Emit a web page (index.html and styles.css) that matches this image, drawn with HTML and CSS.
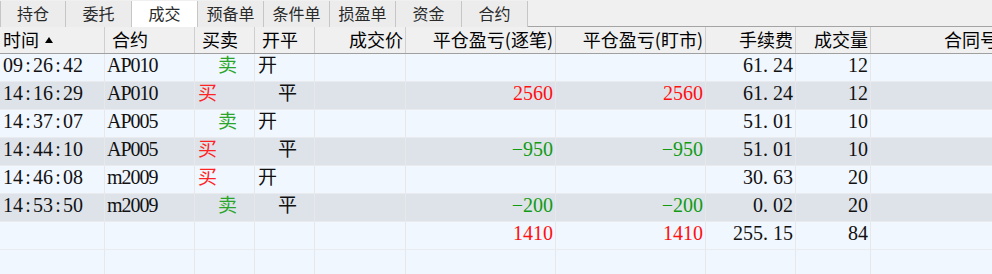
FILE: index.html
```html
<!DOCTYPE html>
<html lang="zh-CN">
<head>
<meta charset="utf-8">
<title>成交</title>
<link rel="stylesheet" href="styles.css">
</head>
<body>
<div class="panel">
  <div class="tabbar">
    <div class="tab">持仓</div>
    <div class="tab">委托</div>
    <div class="tab active">成交</div>
    <div class="tab">预备单</div>
    <div class="tab">条件单</div>
    <div class="tab">损盈单</div>
    <div class="tab">资金</div>
    <div class="tab">合约</div>
    <div class="tabfill"></div>
  </div>
  <div class="grid">
    <div class="row head">
      <div class="h first">时间<span class="sort"></span></div>
      <div class="h">合约</div>
      <div class="h">买卖</div>
      <div class="h">开平</div>
      <div class="h r">成交价</div>
      <div class="h r">平仓盈亏(逐笔)</div>
      <div class="h r">平仓盈亏(盯市)</div>
      <div class="h r">手续费</div>
      <div class="h r">成交量</div>
      <div class="h r">合同号</div>
    </div>

    <div class="row light">
      <div class="c">09<span class="co">:</span>26<span class="co">:</span>42</div>
      <div class="c sym">AP010</div>
      <div class="c cn sell ind">卖</div>
      <div class="c cn">开</div>
      <div class="c r"></div>
      <div class="c r"></div>
      <div class="c r"></div>
      <div class="c r">61<span class="dt">.</span>24</div>
      <div class="c r">12</div>
      <div class="c r"></div>
    </div>

    <div class="row dark">
      <div class="c">14<span class="co">:</span>16<span class="co">:</span>29</div>
      <div class="c sym">AP010</div>
      <div class="c cn buy">买</div>
      <div class="c cn ind">平</div>
      <div class="c r"></div>
      <div class="c r up">2560</div>
      <div class="c r up">2560</div>
      <div class="c r">61<span class="dt">.</span>24</div>
      <div class="c r">12</div>
      <div class="c r"></div>
    </div>

    <div class="row light">
      <div class="c">14<span class="co">:</span>37<span class="co">:</span>07</div>
      <div class="c sym">AP005</div>
      <div class="c cn sell ind">卖</div>
      <div class="c cn">开</div>
      <div class="c r"></div>
      <div class="c r"></div>
      <div class="c r"></div>
      <div class="c r">51<span class="dt">.</span>01</div>
      <div class="c r">10</div>
      <div class="c r"></div>
    </div>

    <div class="row dark">
      <div class="c">14<span class="co">:</span>44<span class="co">:</span>10</div>
      <div class="c sym">AP005</div>
      <div class="c cn buy">买</div>
      <div class="c cn ind">平</div>
      <div class="c r"></div>
      <div class="c r down">−950</div>
      <div class="c r down">−950</div>
      <div class="c r">51<span class="dt">.</span>01</div>
      <div class="c r">10</div>
      <div class="c r"></div>
    </div>

    <div class="row light">
      <div class="c">14<span class="co">:</span>46<span class="co">:</span>08</div>
      <div class="c sym">m2009</div>
      <div class="c cn buy">买</div>
      <div class="c cn">开</div>
      <div class="c r"></div>
      <div class="c r"></div>
      <div class="c r"></div>
      <div class="c r">30<span class="dt">.</span>63</div>
      <div class="c r">20</div>
      <div class="c r"></div>
    </div>

    <div class="row dark">
      <div class="c">14<span class="co">:</span>53<span class="co">:</span>50</div>
      <div class="c sym">m2009</div>
      <div class="c cn sell ind">卖</div>
      <div class="c cn ind">平</div>
      <div class="c r"></div>
      <div class="c r down">−200</div>
      <div class="c r down">−200</div>
      <div class="c r">0<span class="dt">.</span>02</div>
      <div class="c r">20</div>
      <div class="c r"></div>
    </div>

    <div class="row light">
      <div class="c"></div>
      <div class="c"></div>
      <div class="c"></div>
      <div class="c"></div>
      <div class="c r"></div>
      <div class="c r up">1410</div>
      <div class="c r up">1410</div>
      <div class="c r">255<span class="dt">.</span>15</div>
      <div class="c r">84</div>
      <div class="c r"></div>
    </div>

    <div class="row light">
      <div class="c"></div>
      <div class="c"></div>
      <div class="c"></div>
      <div class="c"></div>
      <div class="c"></div>
      <div class="c"></div>
      <div class="c"></div>
      <div class="c"></div>
      <div class="c"></div>
      <div class="c"></div>
    </div>
  </div>
</div>
</body>
</html>
```

FILE: styles.css
```css
html, body {
  margin: 0;
  padding: 0;
  overflow: hidden;
  background: #f1f7fe;
}

.panel {
  width: 1040px;
}

.tabbar {
  display: flex;
  height: 27px;
  background: #f0f0f0;
  font-family: "Noto Sans CJK SC", sans-serif;
  font-size: 16px;
  color: #2a2a2a;
}

.tab {
  box-sizing: border-box;
  width: 66px;
  height: 26px;
  margin-top: 1px;
  border-right: 1px solid #c6c6c6;
  text-align: center;
  line-height: 24px;
  background: #ececec;
}

.tab:first-child {
  border-left: 1px solid #c6c6c6;
  width: 66px;
}

.tab.active {
  background: #ffffff;
}

.tabfill {
  flex: 1;
  border-bottom: 1px solid #a4a4a4;
}

.row {
  display: grid;
  grid-template-columns: 105px 90px 60px 60px 91px 150px 150px 90px 75px 130px;
  box-sizing: border-box;
  height: 28px;
  border-bottom: 1px solid #e9ebee;
}

.row.head {
  height: 27px;
  background: #f0f0f0;
  border-bottom: 1px solid #a0a0a0;
}

.row.light {
  background: #f1f7fe;
}

.row.dark {
  background: #dee3ea;
}

.h {
  box-sizing: border-box;
  padding: 0 7px;
  border-right: 1px solid #cfcfcf;
  font-family: "Noto Sans CJK SC", sans-serif;
  font-size: 18px;
  line-height: 25px;
  color: #000;
  white-space: nowrap;
  overflow: hidden;
}

.h.first {
  padding-left: 3px;
}

.sort {
  display: inline-block;
  width: 0;
  height: 0;
  margin-left: 6px;
  border-left: 4px solid transparent;
  border-right: 4px solid transparent;
  border-bottom: 6px solid #000;
  vertical-align: 4px;
}

.c {
  box-sizing: border-box;
  padding: 0 3px 0 3px;
  border-right: 1px solid #e8e8ea;
  font-family: "Liberation Serif", "Noto Sans CJK SC", serif;
  font-size: 20px;
  line-height: 23px;
  color: #111;
  white-space: nowrap;
  overflow: hidden;
}

.r {
  text-align: right;
  padding-right: 2px;
}

.sym {
  padding-left: 2px;
  letter-spacing: -1px;
}

.co {
  display: inline-block;
  width: 10px;
  text-align: center;
}

.dt {
  display: inline-block;
  width: 10px;
  text-align: left;
}

.cn {
  font-size: 19px;
}

.ind {
  padding-left: 23px;
}

.sell {
  color: #2aa52a;
}

.buy {
  color: #ff2424;
}

.up {
  color: #ff1010;
}

.down {
  color: #139a13;
}
```
